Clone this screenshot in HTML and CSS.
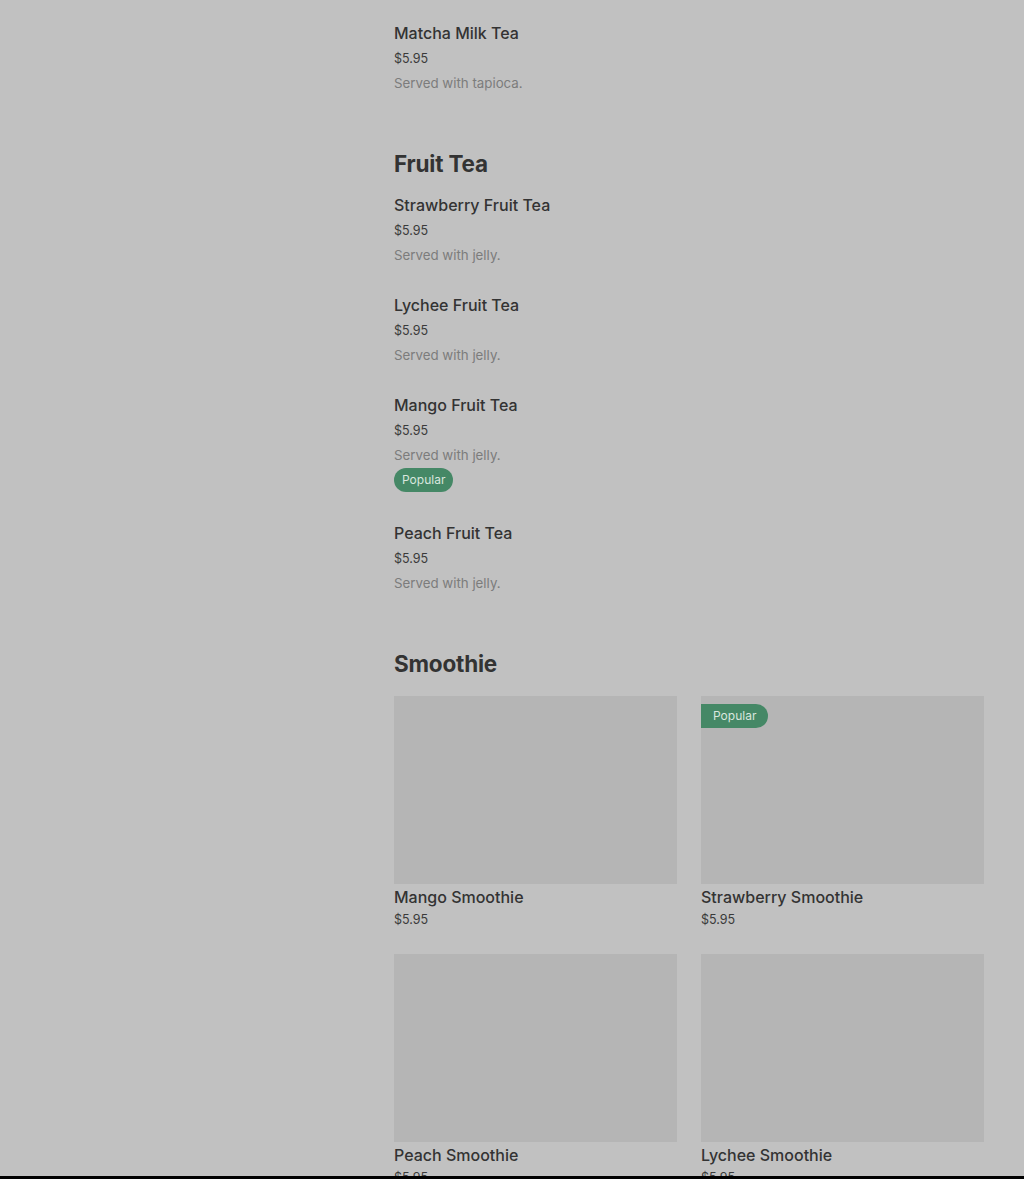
FILE: index.html
```html
<!DOCTYPE html>
<html lang="en">
<head>
    <meta charset="UTF-8">
    <meta name="viewport" content="width=device-width, initial-scale=1.0">
    <title>Menu</title>
    <link rel="stylesheet" href="styles.css">
</head>
<body>
    <div class="page">
        <aside class="sidebar"></aside>

        <main class="menu">
            <section class="menu-section">
                <ul class="item-list">
                    <li class="item">
                        <h3 class="item-name">Matcha Milk Tea</h3>
                        <div class="item-price">$5.95</div>
                        <p class="item-desc">Served with tapioca.</p>
                    </li>
                </ul>
            </section>

            <section class="menu-section">
                <h2 class="section-title">Fruit Tea</h2>
                <ul class="item-list">
                    <li class="item">
                        <h3 class="item-name">Strawberry Fruit Tea</h3>
                        <div class="item-price">$5.95</div>
                        <p class="item-desc">Served with jelly.</p>
                    </li>
                    <li class="item">
                        <h3 class="item-name">Lychee Fruit Tea</h3>
                        <div class="item-price">$5.95</div>
                        <p class="item-desc">Served with jelly.</p>
                    </li>
                    <li class="item">
                        <h3 class="item-name">Mango Fruit Tea</h3>
                        <div class="item-price">$5.95</div>
                        <p class="item-desc">Served with jelly.</p>
                        <span class="badge">Popular</span>
                    </li>
                    <li class="item">
                        <h3 class="item-name">Peach Fruit Tea</h3>
                        <div class="item-price">$5.95</div>
                        <p class="item-desc">Served with jelly.</p>
                    </li>
                </ul>
            </section>

            <section class="menu-section">
                <h2 class="section-title">Smoothie</h2>
                <div class="card-grid">
                    <div class="card">
                        <div class="card-img"></div>
                        <h3 class="card-name">Mango Smoothie</h3>
                        <div class="card-price">$5.95</div>
                    </div>
                    <div class="card">
                        <div class="card-img">
                            <span class="badge badge-flag">Popular</span>
                        </div>
                        <h3 class="card-name">Strawberry Smoothie</h3>
                        <div class="card-price">$5.95</div>
                    </div>
                    <div class="card">
                        <div class="card-img"></div>
                        <h3 class="card-name">Peach Smoothie</h3>
                        <div class="card-price">$5.95</div>
                    </div>
                    <div class="card">
                        <div class="card-img"></div>
                        <h3 class="card-name">Lychee Smoothie</h3>
                        <div class="card-price">$5.95</div>
                    </div>
                </div>
            </section>
        </main>
    </div>

    <div class="bottom-bar"></div>
</body>
</html>
```

FILE: styles.css
```css
/* General */
* {
    margin: 0;
    padding: 0;
    box-sizing: border-box;
}

body {
    font-family: Inter, 'Noto Sans', sans-serif;
    background: #c1c1c1;
    color: #333;
    overflow: hidden;
}

.page {
    display: grid;
    grid-template-columns: 370px 590px;
    column-gap: 24px;
    padding-top: 21px;
}

/* Sections */
.menu-section {
    margin-bottom: 53px;
}

.section-title {
    font-size: 22.5px;
    font-weight: 700;
    line-height: 32px;
    letter-spacing: -0.2px;
    color: #333;
    margin-bottom: 13px;
}

/* List items */
.item-list {
    list-style: none;
}

.item {
    display: flex;
    flex-direction: column;
    align-items: flex-start;
    padding-bottom: 26px;
}

.item:last-child {
    padding-bottom: 0;
}

.item-name,
.card-name {
    font-size: 16px;
    font-weight: 500;
    line-height: 24px;
    color: #333;
}

.item-price,
.card-price {
    font-size: 12.5px;
    line-height: 24px;
    color: #3a3a3a;
}

.item-price {
    margin-top: 2px;
}

.item-desc {
    font-size: 13.3px;
    line-height: 24px;
    color: #7c7c7c;
}

.badge {
    display: inline-block;
    margin: 1px 0 3px;
    height: 24px;
    line-height: 24px;
    padding: 0 8px;
    border-radius: 12px;
    background: #458866;
    color: #d9e6de;
    font-size: 12px;
}

/* Smoothie cards */
.card-grid {
    display: grid;
    grid-template-columns: 1fr 1fr;
    column-gap: 24px;
    row-gap: 24px;
    margin-top: 16px;
}

.card-img {
    position: relative;
    height: 188px;
    background: #b5b5b5;
}

.card-name {
    margin-top: 1px;
}

.card-price {
    line-height: 21px;
}

.badge-flag {
    position: absolute;
    top: 8px;
    left: 0;
    margin: 0;
    padding: 0 12px;
    border-radius: 0 12px 12px 0;
}

.bottom-bar {
    position: fixed;
    left: 0;
    right: 0;
    bottom: 0;
    height: 3px;
    background: #000;
}
```
